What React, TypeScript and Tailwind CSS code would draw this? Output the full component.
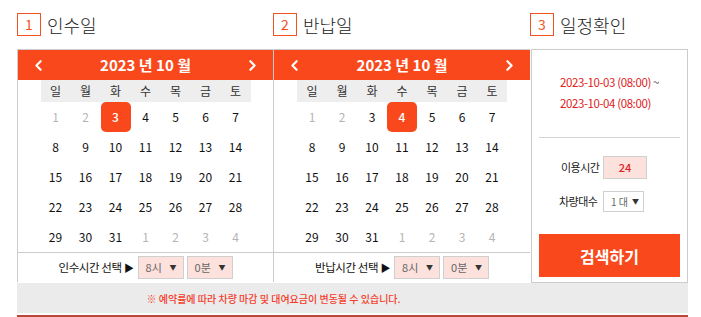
import React from "react";
import { ChevronLeft, ChevronRight } from "lucide-react";

const weekdays = ["일", "월", "화", "수", "목", "금", "토"];

// October 2023 grid; muted = past days or next month
const weeks: { d: number; muted?: boolean }[][] = [
  [{ d: 1, muted: true }, { d: 2, muted: true }, { d: 3 }, { d: 4 }, { d: 5 }, { d: 6 }, { d: 7 }],
  [{ d: 8 }, { d: 9 }, { d: 10 }, { d: 11 }, { d: 12 }, { d: 13 }, { d: 14 }],
  [{ d: 15 }, { d: 16 }, { d: 17 }, { d: 18 }, { d: 19 }, { d: 20 }, { d: 21 }],
  [{ d: 22 }, { d: 23 }, { d: 24 }, { d: 25 }, { d: 26 }, { d: 27 }, { d: 28 }],
  [{ d: 29 }, { d: 30 }, { d: 31 }, { d: 1, muted: true }, { d: 2, muted: true }, { d: 3, muted: true }, { d: 4, muted: true }],
];

const Title = ({ num, label, className }: { num: number; label: string; className: string }) => (
  <div className={`flex items-center ${className}`}>
    <div className="flex h-[23px] w-[24px] items-center justify-center border border-[#f4511e] text-[14px] text-[#f4511e]">
      {num}
    </div>
    <span className="ml-[6px] text-[18px] font-light leading-none text-[#222]">{label}</span>
  </div>
);

const PinkSelect = ({ value, w }: { value: string; w: string }) => (
  <div className={`flex h-[23px] ${w} items-center justify-between border border-[#cfcfcf] bg-[#fde1dc] pl-[7px] pr-[6px]`}>
    <span className="text-[11px] text-[#666]">{value}</span>
    <span className="text-[7px] text-[#333]">▼</span>
  </div>
);

const Calendar = ({ selected, timeLabel, className }: { selected: number; timeLabel: string; className: string }) => (
  <div className={`flex flex-col border-l border-t border-[#cccccc] ${className}`}>
    <div className="flex h-[30px] items-center justify-between bg-[#f9491c] px-[12px] text-white">
      <ChevronLeft size={17} strokeWidth={3} />
      <span className="text-[15px] font-bold">2023 년 10 월</span>
      <ChevronRight size={17} strokeWidth={3} />
    </div>
    <div className="mx-auto w-[210px]">
      <div className="grid h-[22px] grid-cols-7 bg-[#eeeeee]">
        {weekdays.map((w) => (
          <div key={w} className="flex items-center justify-center text-[12px] text-[#333]">
            {w}
          </div>
        ))}
      </div>
      {weeks.map((row, i) => (
        <div key={i} className="grid h-[30px] grid-cols-7">
          {row.map((c, j) => {
            const isSel = !c.muted && c.d === selected;
            return (
              <div
                key={j}
                className={`flex items-center justify-center text-[12px] ${
                  isSel
                    ? "rounded-[5px] bg-[#f9491c] font-medium text-white"
                    : c.muted
                    ? "text-[#b5b5b5]"
                    : "text-[#111]"
                }`}
              >
                {c.d}
              </div>
            );
          })}
        </div>
      ))}
    </div>
    <div className="flex h-[30px] items-center justify-center gap-[3px] border-t border-[#cccccc]">
      <span className="mr-[1px] text-[11.5px] tracking-[-0.4px] text-[#111]">
        {timeLabel} <span className="text-[10px]">▶</span>
      </span>
      <PinkSelect value="8시" w="w-[46px]" />
      <PinkSelect value="0분" w="w-[46px]" />
    </div>
  </div>
);

export default function App() {
  return (
    <div className="w-[701px] bg-white pl-[17px] pt-[13px] font-['Noto_Sans_CJK_KR',sans-serif]">
      <div className="flex h-[36px] items-start">
        <Title num={1} label="인수일" className="w-[256px]" />
        <Title num={2} label="반납일" className="w-[257px]" />
        <Title num={3} label="일정확인" className="w-[158px]" />
      </div>
      <div className="flex items-start">
        <Calendar selected={3} timeLabel="인수시간 선택" className="w-[256px]" />
        <Calendar selected={4} timeLabel="반납시간 선택" className="w-[257px]" />
        <div className="ml-[1px] flex h-[234px] w-[157px] flex-col border border-[#cccccc] px-[7px]">
          <div className="mt-[22px] text-center">
            <div className="inline-block text-left text-[11.5px] leading-[21px] tracking-[-0.4px] text-[#e0201b]">
              <div>
                2023-10-03 (08:00) <span className="text-[#555]">~</span>
              </div>
              <div>2023-10-04 (08:00)</div>
            </div>
          </div>
          <div className="mt-[23px] h-px bg-[#d5d5d5]" />
          <div className="ml-[22px] mt-[18px] flex items-center">
            <span className="w-[40px] text-[11px] tracking-[-0.5px] text-[#222]">이용시간</span>
            <div className="ml-[2px] flex h-[23px] w-[44px] items-center justify-center border border-[#cfcfcf] bg-[#fde1dc] text-[11px] font-medium text-[#e0201b]">
              24
            </div>
          </div>
          <div className="ml-[20px] mt-[12px] flex items-center">
            <span className="w-[42px] text-[11px] tracking-[-0.5px] text-[#222]">차량대수</span>
            <div className="ml-[2px] flex h-[21px] w-[41px] items-center justify-between border border-[#cfcfcf] bg-white pl-[7px] pr-[4px]">
              <span className="text-[10px] text-[#666]">1 대</span>
              <span className="text-[7px] text-[#333]">▼</span>
            </div>
          </div>
          <div className="mt-[22px] flex h-[43px] items-center justify-center bg-[#f9491c] text-[16px] font-bold text-white">
            검색하기
          </div>
        </div>
      </div>
      <div className="flex h-[30px] w-[671px] items-center bg-[#ebebeb]">
        <div className="w-[513px] text-center text-[10px] font-medium tracking-[0px] text-[#f4402c]">
          ※ 예약률에 따라 차량 마감 및 대여요금이 변동될 수 있습니다.
        </div>
      </div>
      <div className="mt-[2px] h-[2px] w-[671px] bg-[#b9483a]" />
    </div>
  );
}
